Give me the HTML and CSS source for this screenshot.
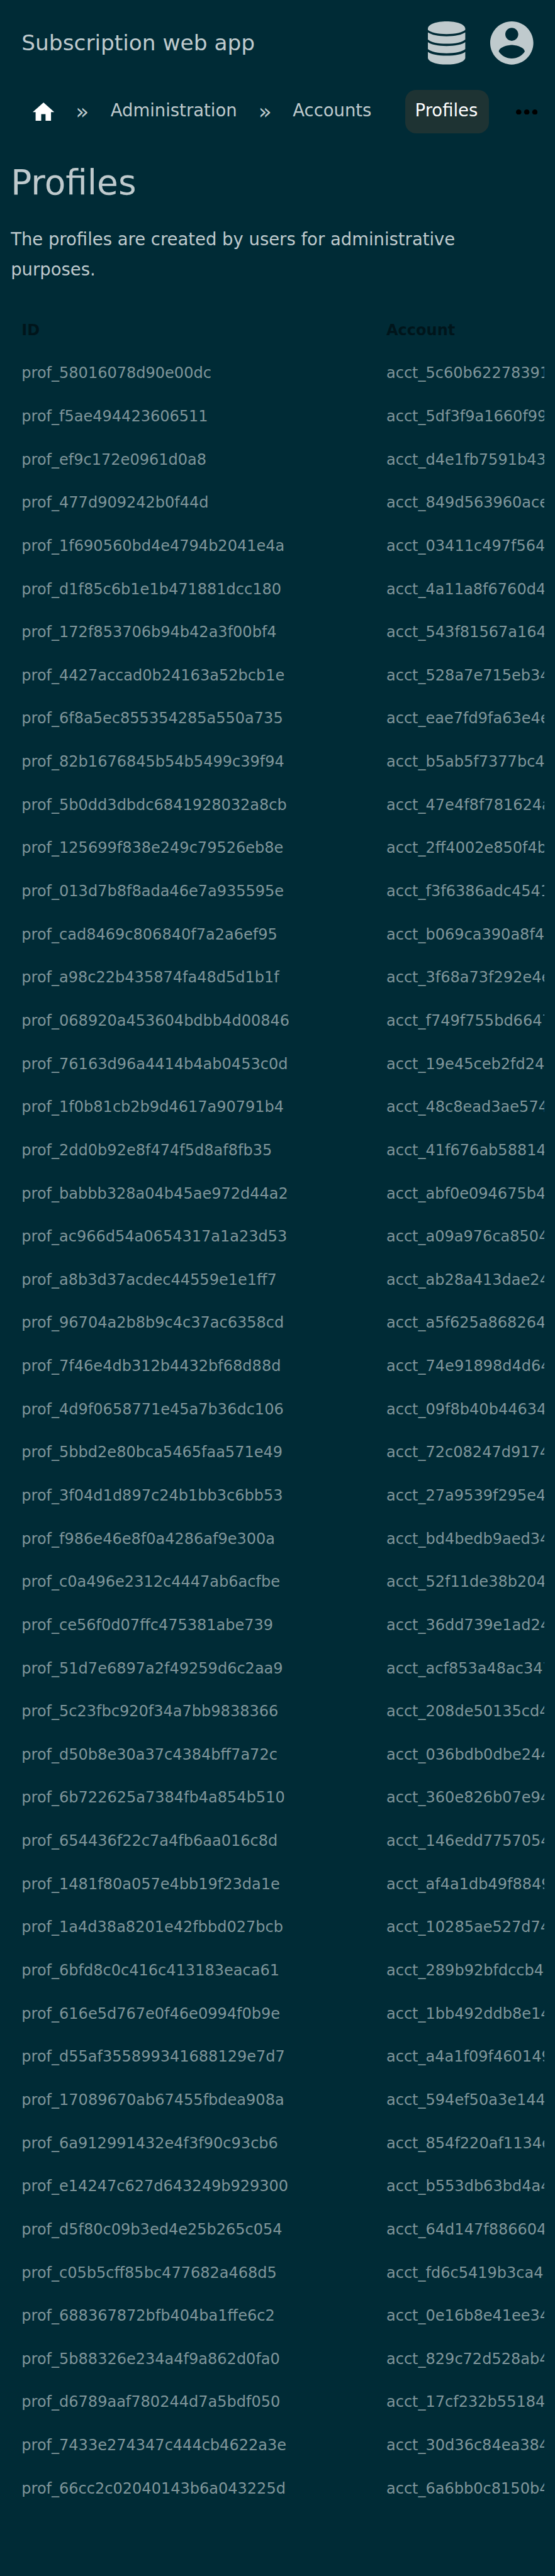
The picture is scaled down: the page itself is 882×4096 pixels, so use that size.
FILE: index.html
```html
<!DOCTYPE html>
<html lang="en">
<head>
<meta charset="utf-8">
<title>Profiles - Subscription web app</title>
<link rel="stylesheet" href="styles.css">
</head>
<body>
<header class="topbar">
  <div class="brand">Subscription web app</div>
  <div class="tools">
    <svg class="icon-db" viewBox="0 0 97 112"><path d="M0 18C2 7 22 0 48.500 0S95 7 97 18V22C90 29 70 33 48.500 33S7 29 0 22ZM0 28.700C9 35 27 38.700 48.500 38.700S88 35 97 28.700V46.700C90 54 70 58 48.500 58S7 54 0 46.700ZM0 54C9 60.500 27 64 48.500 64S88 60.500 97 54V72C90 79 70 83 48.500 83S7 79 0 72ZM0 79C9 85.500 27 89 48.500 89S88 85.500 97 79V95C95 105 75 112 48.500 112S2 105 0 95Z"/></svg>
    <svg class="icon-user" viewBox="2 2 20 20"><path d="M12 2C6.480 2 2 6.480 2 12s4.480 10 10 10 10-4.480 10-10S17.520 2 12 2zm0 3c1.660 0 3 1.340 3 3s-1.340 3-3 3-3-1.340-3-3 1.340-3 3-3zm0 14.200c-2.500 0-4.710-1.280-6-3.220.03-1.990 4-3.080 6-3.080 1.990 0 5.970 1.090 6 3.080-1.290 1.940-3.500 3.220-6 3.220z"/></svg>
  </div>
</header>
<nav class="crumbs">
  <svg class="icon-home" viewBox="0 0 56 48"><path d="M28 0L56 25H47.500V48H33.300V30.300H22V48H7.500V25H0Z"/></svg>
  <span class="sep">»</span>
  <a class="crumb admin">Administration</a>
  <span class="sep">»</span>
  <a class="crumb accounts">Accounts</a>
  <a class="crumb current">Profiles</a>
  <svg class="icon-more" viewBox="0 0 56 14"><circle cx="7" cy="7" r="7"/><circle cx="28" cy="7" r="7"/><circle cx="49" cy="7" r="7"/></svg>
</nav>
<main>
  <h1>Profiles</h1>
  <p class="intro">The profiles are created by users for administrative purposes.</p>
  <div class="table" id="table">
    <div class="row head"><span>ID</span><span>Account</span></div>
  </div>
</main>
<script src="rows.js"></script>
</body>
</html>
```
FILE: styles.css
```css
* { box-sizing: border-box; }
body {
  margin: 0;
  min-height: 4096px;
  overflow-x: hidden;
  background: #002b36;
  color: #bfcacd;
  font-family: "DejaVu Sans", sans-serif;
}
.topbar {
  display: flex;
  align-items: center;
  justify-content: space-between;
  height: 137.300px;
  padding: 0 34.300px;
}
.brand { font-size: 34.330px; line-height: 40px; padding-bottom: 1px; }
.tools { display: flex; gap: 39.500px; }
.icon-db { width: 59.400px; height: 68.650px; fill: #bfcacd; }
.icon-user { width: 68.650px; height: 68.650px; fill: #bfcacd; }
.crumbs {
  display: flex;
  align-items: center;
  height: 81px;
  padding-left: 51.500px;
  font-size: 27.460px;
}
.icon-home { width: 34.300px; height: 29.400px; fill: #fff; }
.sep {
  width: 21px;
  margin-left: 34.500px;
  padding-bottom: 2px;
  font-size: 34.330px;
  line-height: 40px;
}
.crumb { line-height: 65.650px; padding-bottom: 3px; }
.admin { margin-left: 34.400px; }
.admin + .sep { margin-left: 34.200px; }
.accounts { margin-left: 33.500px; }
.current {
  height: 68.650px;
  width: 133px;
  margin-left: 53.700px;
  padding-left: 15.500px;
  border-radius: 17.200px;
  background: #1e3333;
  color: #fff;
}
.icon-more { width: 34.300px; height: 8.600px; margin-left: 43px; fill: #000; }
main { padding: 0 17.160px; }
h1 {
  margin: 34px 0 0;
  font-size: 54.920px;
  font-weight: 400;
  line-height: 76px;
}
.intro {
  margin: 29px 0 0;
  font-size: 27.460px;
  line-height: 47.200px;
}
.table {
  margin-top: 39px;
  padding-left: 17.160px;
  overflow: hidden;
  font-size: 24.030px;
  color: #7f959a;
}
.row {
  display: grid;
  grid-template-columns: 579.700px 400px;
  line-height: 68.655px;
  height: 68.655px;
  white-space: nowrap;
}
.head { color: #00151b; font-weight: 700; }
```
FILE: rows.js
```js
const rows = `58016078d90e00dc 5c60b62278391
f5ae494423606511 5df3f9a1660f99
ef9c172e0961d0a8 d4e1fb7591b43
477d909242b0f44d 849d563960ace
1f690560bd4e4794b2041e4a 03411c497f564
d1f85c6b1e1b471881dcc180 4a11a8f6760d4
172f853706b94b42a3f00bf4 543f81567a164
4427accad0b24163a52bcb1e 528a7e715eb34
6f8a5ec855354285a550a735 eae7fd9fa63e4e
82b1676845b54b5499c39f94 b5ab5f7377bc4
5b0dd3dbdc6841928032a8cb 47e4f8f781624a
125699f838e249c79526eb8e 2ff4002e850f4b
013d7b8f8ada46e7a935595e f3f6386adc4541
cad8469c806840f7a2a6ef95 b069ca390a8f4
a98c22b435874fa48d5d1b1f 3f68a73f292e4e
068920a453604bdbb4d00846 f749f755bd6647
76163d96a4414b4ab0453c0d 19e45ceb2fd24
1f0b81cb2b9d4617a90791b4 48c8ead3ae574
2dd0b92e8f474f5d8af8fb35 41f676ab58814
babbb328a04b45ae972d44a2 abf0e094675b4
ac966d54a0654317a1a23d53 a09a976ca8504
a8b3d37acdec44559e1e1ff7 ab28a413dae24
96704a2b8b9c4c37ac6358cd a5f625a868264
7f46e4db312b4432bf68d88d 74e91898d4d64
4d9f0658771e45a7b36dc106 09f8b40b44634
5bbd2e80bca5465faa571e49 72c08247d9174
3f04d1d897c24b1bb3c6bb53 27a9539f295e4
f986e46e8f0a4286af9e300a bd4bedb9aed34
c0a496e2312c4447ab6acfbe 52f11de38b204
ce56f0d07ffc475381abe739 36dd739e1ad24
51d7e6897a2f49259d6c2aa9 acf853a48ac347
5c23fbc920f34a7bb9838366 208de50135cd4
d50b8e30a37c4384bff7a72c 036bdb0dbe244
6b722625a7384fb4a854b510 360e826b07e94
654436f22c7a4fb6aa016c8d 146edd7757054
1481f80a057e4bb19f23da1e af4a1db49f8849
1a4d38a8201e42fbbd027bcb 10285ae527d74
6bfd8c0c416c413183eaca61 289b92bfdccb4
616e5d767e0f46e0994f0b9e 1bb492ddb8e14
d55af355899341688129e7d7 a4a1f09f460149
17089670ab67455fbdea908a 594ef50a3e144
6a912991432e4f3f90c93cb6 854f220af1134e
e14247c627d643249b929300 b553db63bd4a4
d5f80c09b3ed4e25b265c054 64d147f886604
c05b5cff85bc477682a468d5 fd6c5419b3ca4
688367872bfb404ba1ffe6c2 0e16b8e41ee34
5b88326e234a4f9a862d0fa0 829c72d528ab4
d6789aaf780244d7a5bdf050 17cf232b55184
7433e274347c444cb4622a3e 30d36c84ea384
66cc2c02040143b6a043225d 6a6bb0c8150b4`;
const table = document.getElementById('table');
for (const line of rows.split('\n')) {
  const [profile, account] = line.split(' ');
  const row = document.createElement('div');
  row.className = 'row';
  for (const text of ['prof_' + profile, 'acct_' + account]) {
    const cell = document.createElement('span');
    cell.textContent = text;
    row.append(cell);
  }
  table.append(row);
}
```
